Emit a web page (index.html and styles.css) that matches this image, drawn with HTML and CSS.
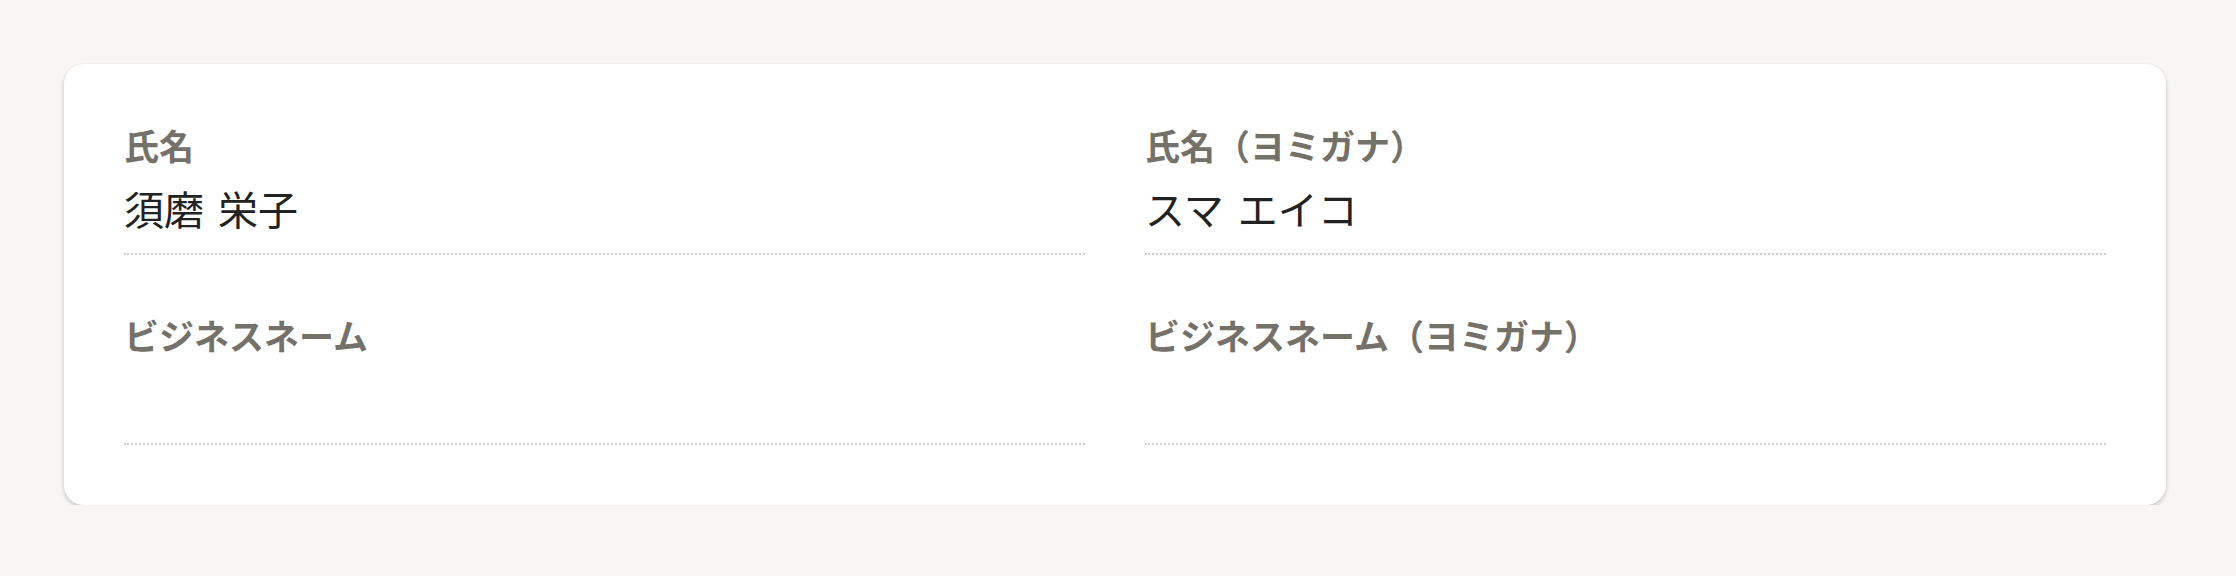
FILE: index.html
```html
<!DOCTYPE html>
<html lang="ja">
<head>
<meta charset="utf-8">
<title>氏名</title>
<link rel="stylesheet" href="styles.css">
</head>
<body>
  <main class="page">
    <section class="card">
      <div class="field">
        <div class="field-label">氏名</div>
        <div class="field-value">須磨 栄子</div>
      </div>
      <div class="field">
        <div class="field-label">氏名（ヨミガナ）</div>
        <div class="field-value">スマ エイコ</div>
      </div>
      <div class="field">
        <div class="field-label">ビジネスネーム</div>
        <div class="field-value"></div>
      </div>
      <div class="field">
        <div class="field-label">ビジネスネーム（ヨミガナ）</div>
        <div class="field-value"></div>
      </div>
    </section>
  </main>
</body>
</html>
```

FILE: styles.css
```css
html, body {
  margin: 0;
  padding: 0;
  background: #f7f6f4;
}

body {
  font-family: "Noto Sans CJK JP", "Noto Sans", sans-serif;
}

.page {
  padding: 64px 0 0 64px;
}

.card {
  width: 2102px;
  box-sizing: border-box;
  background: #ffffff;
  border-radius: 20px;
  box-shadow: 0 2px 4px rgba(0, 0, 0, 0.22);
  padding: 57px 60px 60px;
  display: grid;
  grid-template-columns: 1fr 1fr;
  column-gap: 60px;
  row-gap: 56px;
}

.field {
  display: flex;
  flex-direction: column;
  gap: 11px;
  padding-bottom: 17px;
  border-bottom: 2px dotted #cfcfcf;
}

.field-label {
  font-size: 35px;
  line-height: 48px;
  font-weight: 700;
  color: #74716a;
}

.field-value {
  font-size: 40px;
  line-height: 56px;
  min-height: 56px;
  word-spacing: 5px;
  color: #222222;
}
```
